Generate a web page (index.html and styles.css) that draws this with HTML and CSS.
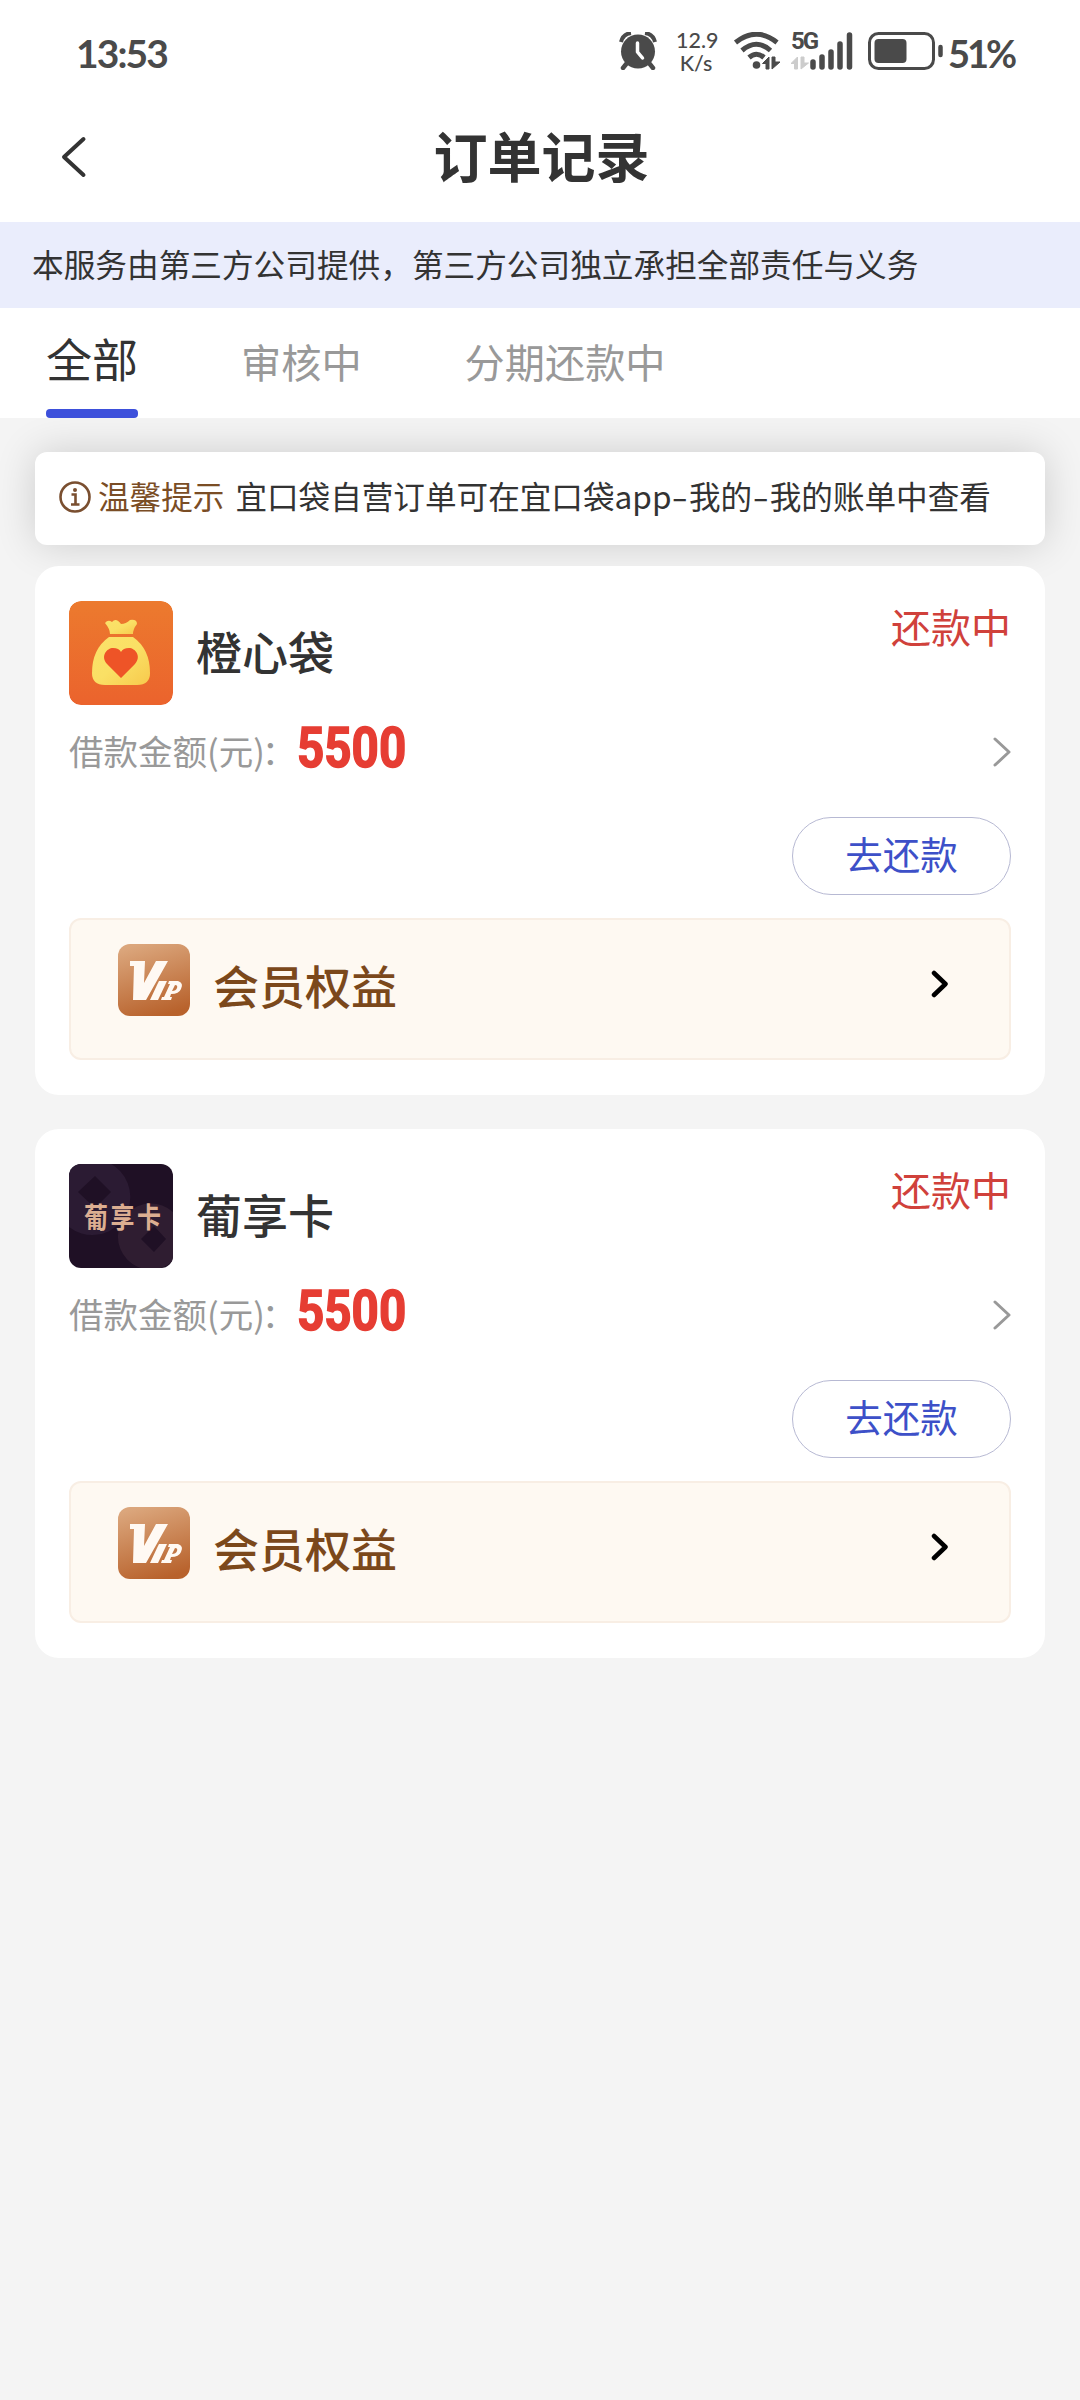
FILE: index.html
```html
<!DOCTYPE html>
<html lang="zh-CN">
<head>
<meta charset="utf-8">
<title>订单记录</title>
<link rel="stylesheet" href="styles.css">
</head>
<body>
<svg class="defs" width="0" height="0" aria-hidden="true">
  <defs>
    <linearGradient id="orange" x1="0" y1="0" x2="0" y2="1"><stop offset="0" stop-color="#ec7a2e"/><stop offset="1" stop-color="#eb632d"/></linearGradient>
    <linearGradient id="gold" x1="0" y1="0" x2="1" y2="1"><stop offset="0" stop-color="#fbe26a"/><stop offset="0.5" stop-color="#fae065"/><stop offset="1" stop-color="#f7c94c"/></linearGradient>
    <linearGradient id="copper" x1="0.3" y1="0" x2="0.6" y2="1"><stop offset="0" stop-color="#dba67c"/><stop offset="1" stop-color="#b8622c"/></linearGradient>
    <symbol id="vip" viewBox="0 0 72 72">
      <rect width="72" height="72" rx="12" fill="url(#copper)"/>
      <path d="M12 17H27L26 39L38 17H50L28 56H15L16 22H12Z" fill="#fff9f3"/>
      <path d="M41 37H49L40 56H32L39 41H39Z" fill="#fff9f3"/>
      <path d="M51 37H60Q66 39 63 45Q61 50 53 50L52 53H54L53 56H43L44 53H46L52 40H50ZM57 41L54 47Q58 47 59 44Q60 41 57 41Z" fill="#fff9f3" fill-rule="evenodd"/>
    </symbol>
    <symbol id="next" viewBox="0 0 18 30"><path d="M2 2L16 15L2 28" fill="none" stroke="#999" stroke-width="3" stroke-linecap="round" stroke-linejoin="round"/></symbol>
    <symbol id="more" viewBox="0 0 18 28"><path d="M3 3L14.500 14L3 25" fill="none" stroke="#000" stroke-width="4.500" stroke-linecap="round" stroke-linejoin="round"/></symbol>
  </defs>
</svg>

<header class="status">
  <span class="clock">13:53</span>
  <div class="indicators">
    <svg class="alarm" width="38" height="38" viewBox="0 0 38 38">
      <circle cx="19" cy="19.500" r="17" fill="#4a4a4a"/>
      <path d="M2 10Q4 2 12 1M26 1Q34 2 36 10" fill="none" stroke="#4a4a4a" stroke-width="4"/>
      <path d="M8 31L4 36M30 31L34 36" stroke="#4a4a4a" stroke-width="4.500" stroke-linecap="round"/>
      <path d="M18.500 11V20L23.500 26" fill="none" stroke="#fff" stroke-width="3.500" stroke-linecap="round" stroke-linejoin="round"/>
    </svg>
    <div class="speed"><span>12.9</span><span>K/s</span></div>
    <svg class="wifi" width="48" height="38" viewBox="0 0 48 38">
      <path d="M2.500 10.500Q23.500 -6 44 10.500M9 18.500Q23.500 6 37.500 18.500M16 25.500Q23.500 19 31 25.500" fill="none" stroke="#4a4a4a" stroke-width="5"/>
      <circle cx="23.500" cy="33" r="3.800" fill="#4a4a4a"/>
      <path d="M29.500 31.500L36 25V37H33V31.500ZM39 25V37L47 30H42V25Z" fill="#4a4a4a" stroke="#4a4a4a" stroke-width="1"/>
    </svg>
    <div class="cell">
      <span class="cell-label">5G</span>
      <svg width="62" height="38" viewBox="0 0 62 38">
        <path d="M0 31.500L6.500 25V37H3.500V31.500ZM10 25V37L17.500 31H13V25Z" fill="#ccc" stroke="#ccc" stroke-width="1"/>
        <path d="M22 30V35M31 25V35M40 20V35M49 12V35M58.500 3V35" stroke="#4a4a4a" stroke-width="5.500" stroke-linecap="round"/>
      </svg>
    </div>
    <svg class="battery" width="75" height="38" viewBox="0 0 75 38">
      <rect x="1.500" y="1.500" width="64" height="35" rx="9" fill="none" stroke="#4a4a4a" stroke-width="3"/>
      <rect x="6.500" y="7" width="32" height="24" rx="4" fill="#4a4a4a"/>
      <path d="M72.500 15V23" stroke="#4a4a4a" stroke-width="4.500" stroke-linecap="round"/>
    </svg>
    <span class="percent">51%</span>
  </div>
</header>

<nav class="navbar">
  <svg class="back" width="26" height="42" viewBox="0 0 26 42"><path d="M22.500 3L3 21L22.500 39" fill="none" stroke="#333" stroke-width="4" stroke-linecap="round" stroke-linejoin="round"/></svg>
  <h1 class="title">订单记录</h1>
</nav>

<p class="notice">本服务由第三方公司提供，第三方公司独立承担全部责任与义务</p>

<div class="tabs">
  <div class="tab active">全部</div>
  <div class="tab">审核中</div>
  <div class="tab">分期还款中</div>
</div>

<main class="content">
  <div class="tip">
    <svg class="info" width="32" height="32" viewBox="0 0 32 32">
      <circle cx="16" cy="16" r="14.500" fill="none" stroke="#7a4f30" stroke-width="2.600"/>
      <circle cx="16" cy="9" r="2" fill="#7a4f30"/>
      <path d="M12.500 13.500H16.500V23M12 23.500H20.500" fill="none" stroke="#7a4f30" stroke-width="2.600"/>
    </svg>
    <span class="tip-label">温馨提示</span>
    <span class="tip-text">宜口袋自营订单可在宜口袋app<span class="dash">-</span>我的<span class="dash">-</span>我的账单中查看</span>
  </div>

  <section class="card">
    <div class="head">
      <svg class="logo" width="104" height="104" viewBox="0 0 104 104">
        <rect width="104" height="104" rx="12" fill="url(#orange)"/>
        <path d="M36 22Q39 18 43 21Q47 16 52 23Q57 23 61 19Q68 18 68 23Q64 28 64 33H41Q41 28 36 22Z" fill="url(#gold)"/>
        <path d="M40 36H64Q81 48 81 72Q81 84 68 84H36Q23 84 23 72Q23 48 40 36Z" fill="url(#gold)"/>
        <path d="M52 77L38 63C31 55 38 47 44 47Q50 47 52 51Q54 47 60 47C66 47 73 55 66 63Z" fill="#ee5427"/>
      </svg>
      <h2 class="name">橙心袋</h2>
      <span class="state">还款中</span>
    </div>
    <div class="amount">
      <span class="amount-label">借款金额(元)<span class="colon">：</span></span>
      <strong class="amount-value">5500</strong>
      <svg class="next" width="18" height="30"><use href="#next"/></svg>
    </div>
    <div class="actions"><button class="repay">去还款</button></div>
    <div class="benefit">
      <svg width="72" height="72"><use href="#vip"/></svg>
      <span class="benefit-name">会员权益</span>
      <svg class="more" width="18" height="28"><use href="#more"/></svg>
    </div>
  </section>

  <section class="card">
    <div class="head">
      <div class="logo dark-logo">
        <svg width="104" height="104" viewBox="0 0 104 104">
          <path fill="#2b1b33" fill-rule="evenodd" d="M0 3A38 38 0 1 1 0 63ZM26 12L42 28L26 44L9 28Z"/>
          <path fill="#2f1d31" fill-rule="evenodd" d="M104 48A33 33 0 1 0 104 97ZM85 62L97 75L85 88L72 75Z"/>
        </svg>
        <span class="dark-text">葡享卡</span>
      </div>
      <h2 class="name">葡享卡</h2>
      <span class="state">还款中</span>
    </div>
    <div class="amount">
      <span class="amount-label">借款金额(元)<span class="colon">：</span></span>
      <strong class="amount-value">5500</strong>
      <svg class="next" width="18" height="30"><use href="#next"/></svg>
    </div>
    <div class="actions"><button class="repay">去还款</button></div>
    <div class="benefit">
      <svg width="72" height="72"><use href="#vip"/></svg>
      <span class="benefit-name">会员权益</span>
      <svg class="more" width="18" height="28"><use href="#more"/></svg>
    </div>
  </section>
</main>
</body>
</html>
```
FILE: styles.css
```css
* { box-sizing: border-box; }
body {
  margin: 0;
  min-height: 2400px;
  background: #f4f4f4;
  color: #333;
  font-family: "Noto Sans CJK SC", sans-serif;
}
svg { display: block; flex: none; }
.defs { position: absolute; }
h1, h2, p { margin: 0; }

.status {
  display: flex;
  justify-content: space-between;
  height: 104px;
  padding: 32px 64px 0 76px;
  background: #fff;
  color: #4a4a4a;
  font-family: Lato, sans-serif;
}
.clock, .percent { font-size: 39px; font-weight: 700; line-height: 43px; letter-spacing: -1.9px; }
.clock { width: 92px; }
.indicators { display: flex; }
.speed {
  display: flex;
  flex-direction: column;
  width: 40px;
  margin: -3px 0 0 19px;
  font: 500 21.500px/22.500px Lato, sans-serif;
  text-align: center;
}
.wifi { margin-left: 17px; }
.cell { position: relative; margin-left: 10px; }
.cell-label { position: absolute; left: 0; top: -3px; font: 700 24px/24px Roboto, sans-serif; letter-spacing: -2px; }
.battery { margin-left: 15px; }
.percent { width: 68px; margin-left: 5px; font-size: 38px; letter-spacing: -3px; white-space: nowrap; }

.navbar {
  position: relative;
  display: flex;
  align-items: center;
  justify-content: center;
  height: 118px;
  padding: 0 0 16px 3px;
  background: #fff;
}
.back { position: absolute; left: 61px; top: 32px; }
.title { font-size: 54px; line-height: 80px; font-weight: 700; }

.notice {
  height: 86px;
  padding-left: 32px;
  background: #eaedfc;
  font-size: 31.660px;
  line-height: 82px;
  white-space: nowrap;
}

.tabs {
  display: flex;
  gap: 103px;
  height: 110px;
  padding-left: 46px;
  background: #fff;
}
.tab { color: #999; font-size: 40.200px; line-height: 105px; white-space: nowrap; }
.active {
  display: flex;
  flex-direction: column;
  color: #333;
  font-size: 46px;
  line-height: 98px;
}
.active::after {
  content: "";
  height: 9px;
  margin-top: 3px;
  border-radius: 4px;
  background: #3d50db;
}

.content {
  display: flex;
  flex-direction: column;
  padding: 34px 35px;
  overflow: hidden;
}
.tip {
  display: flex;
  align-items: center;
  height: 93px;
  margin-bottom: 21px;
  padding: 0 24px 4px;
  border-radius: 12px;
  background: #fff;
  box-shadow: 0 0 40px rgba(0, 0, 0, 0.16);
  font-size: 31.600px;
  line-height: 40px;
  white-space: nowrap;
}
.tip-label { margin: -4px 0 0 7px; color: #7a4d25; }
.tip-text { margin: -4px 0 0 11px; }
.dash { display: inline-block; width: 17.500px; text-align: center; transform: scaleX(1.5); }

.card {
  height: 529px;
  margin-bottom: 34px;
  padding: 35px 34px;
  border-radius: 24px;
  background: #fff;
}
.head { display: flex; height: 104px; }
.logo { flex: none; width: 104px; height: 104px; border-radius: 12px; }
.dark-logo {
  position: relative;
  overflow: hidden;
  background: #1f1025;
}
.dark-text {
  position: absolute;
  left: 15px;
  top: 32px;
  color: #dcae91;
  font-size: 24px;
  font-weight: 700;
  line-height: 40px;
  letter-spacing: 2.500px;
  white-space: nowrap;
  transform: scaleY(1.2);
}
.name { margin-left: 23px; font-size: 46px; font-weight: 500; line-height: 98px; }
.state { margin-left: auto; color: #d0413b; font-size: 40px; line-height: 50px; }
.amount { display: flex; align-items: center; height: 90px; }
.amount-label { width: 228px; color: #999; font-size: 34.500px; line-height: 90px; white-space: nowrap; }
.colon { margin-left: -3px; }
.amount-value {
  color: #e63d33;
  font: 700 56px/80px Roboto, sans-serif;
  -webkit-text-stroke: 1.500px #e63d33;
  transform: translateY(-2px) scaleX(0.85);
  transform-origin: left;
}
.next { margin: 4px 0 0 auto; }
.actions { display: flex; justify-content: flex-end; margin-top: 22px; }
.repay {
  width: 219px;
  height: 78px;
  padding: 0 0 6px;
  border: 1px solid #b7b9d3;
  border-radius: 39px;
  background: #fff;
  color: #3d50c8;
  font: 400 37.500px/68px "Noto Sans CJK SC", sans-serif;
}
.benefit {
  display: flex;
  height: 142px;
  margin-top: 23px;
  padding: 24px 60px 0 47px;
  border: 2px solid #f8eee4;
  border-radius: 12px;
  background: #fef9f2;
}
.benefit-name { margin-left: 23px; color: #7b481b; font-size: 46px; font-weight: 500; line-height: 80px; }
.more { margin: 26px 0 0 auto; }
```
